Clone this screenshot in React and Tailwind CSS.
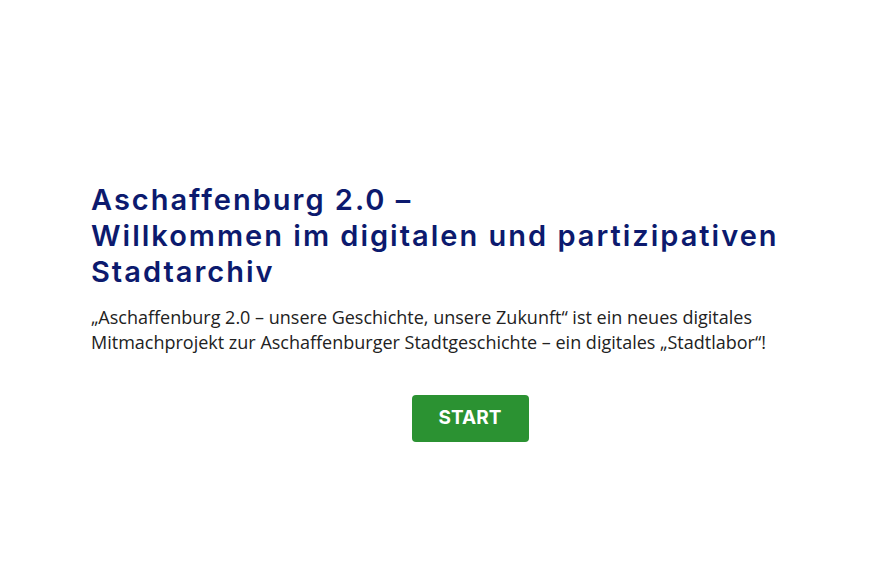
export default function App() {
  return (
    <div className="min-h-screen w-full bg-white">
      <div className="ml-[91px] w-[758px] pt-[182px]">
        <h1 className="font-['Inter',sans-serif] text-[29px] font-semibold leading-[36px] tracking-[2px] text-[#0c1a6e]">
          Aschaffenburg 2.0 –
          <br />
          Willkommen im digitalen und partizipativen Stadtarchiv
        </h1>
        <p className="mt-[15px] font-['Open_Sans',sans-serif] text-[18px] leading-[25px] text-[#222]">
          „Aschaffenburg 2.0 – unsere Geschichte, unsere Zukunft“ ist ein neues digitales
          <br />
          Mitmachprojekt zur Aschaffenburger Stadtgeschichte – ein digitales „Stadtlabor“!
        </p>
        <div className="mt-[40px] flex justify-center">
          <button className="h-[47px] w-[117px] rounded-[4px] bg-[#2b9232] font-['Inter',sans-serif] text-[19px] font-bold text-white">
            START
          </button>
        </div>
      </div>
    </div>
  );
}
